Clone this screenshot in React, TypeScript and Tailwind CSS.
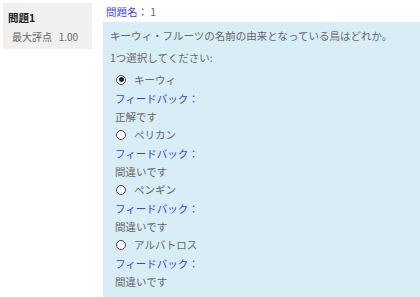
const FONT = "font-['Meiryo','Noto_Sans_CJK_JP',sans-serif]";

type Choice = { label: string; feedback: string; checked?: boolean };

const choices: Choice[] = [
  { label: "キーウィ", feedback: "正解です", checked: true },
  { label: "ペリカン", feedback: "間違いです" },
  { label: "ペンギン", feedback: "間違いです" },
  { label: "アルバトロス", feedback: "間違いです" },
];

function Radio({ checked }: { checked?: boolean }) {
  return (
    <span className="flex h-[10px] w-[10px] items-center justify-center rounded-full border border-[#444] bg-white">
      {checked && <span className="h-[5px] w-[5px] rounded-full bg-[#222]" />}
    </span>
  );
}

export default function App() {
  return (
    <div className={`flex h-[297px] w-[420px] items-start overflow-hidden bg-white text-[10.5px] text-[#666] ${FONT}`}>
      <div className="ml-[3px] mt-[3px] h-[46px] w-[89px] bg-[#f0f0f0] pl-[5px] pt-[8px]">
        <div className="text-[10.5px] font-bold leading-[13px] text-[#222]">問題1</div>
        <div className="mt-[7px] pl-[4px] text-[10px] leading-[12px] text-[#666]">
          最大評点&nbsp;&nbsp;&nbsp;1.00
        </div>
      </div>
      <div className="ml-[11px] flex-1">
        <div className="ml-[3px] mt-[5px] h-[17px] leading-[14px]">
          <span className="text-[#3b3bff]">問題名：</span> 1
        </div>
        <div className="h-[280px] bg-[#d9edf7] pl-[7px] pt-[6px]">
          <p className="leading-[15px]">キーウィ・フルーツの名前の由来となっている鳥はどれか。</p>
          <p className="mt-[7px] leading-[15px]">1つ選択してください:</p>
          <div className="mt-[5px] pl-[5px]">
            {choices.map((c) => (
              <div key={c.label}>
                <div className="flex h-[18px] items-center gap-[8px] pl-[1px] pt-[1px]">
                  <Radio checked={c.checked} />
                  <span>{c.label}</span>
                </div>
                <div className="h-[20px] pt-[3px] leading-[15px] text-[#3b3bff]">フィードバック：</div>
                <div className="h-[17px] pt-[1px] leading-[15px]">{c.feedback}</div>
              </div>
            ))}
          </div>
        </div>
      </div>
    </div>
  );
}
